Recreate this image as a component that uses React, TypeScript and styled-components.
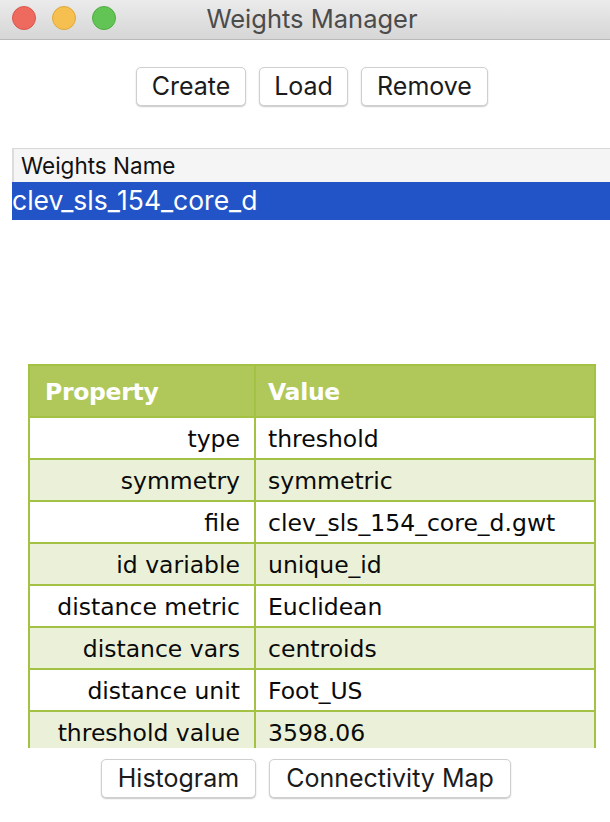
import React from "react";
import styled, { createGlobalStyle } from "styled-components";

const Global = createGlobalStyle`
  html, body { margin: 0; padding: 0; background: #ffffff; }
  body { width: 610px; height: 822px; overflow: hidden; font-family: Inter, "Liberation Sans", sans-serif; }
  * { box-sizing: border-box; }
`;

const Window = styled.div`
  width: 610px;
  height: 822px;
  display: flex;
  flex-direction: column;
  background: #ffffff;
`;

const TitleBar = styled.div`
  height: 40px;
  flex: none;
  display: flex;
  align-items: center;
  position: relative;
  background: linear-gradient(#ebebeb, #d6d6d6);
  border-bottom: 1px solid #b9b9b9;
`;

const Lights = styled.div`
  display: flex;
  gap: 16px;
  padding-left: 12px;
  margin-top: -3px;
`;

const Light = styled.span<{ $c: string; $b: string }>`
  width: 24px;
  height: 24px;
  border-radius: 50%;
  background: ${(p) => p.$c};
  border: 1px solid ${(p) => p.$b};
`;

const Title = styled.div`
  position: absolute;
  left: 0;
  right: 0;
  top: 0;
  bottom: 0;
  display: flex;
  align-items: center;
  justify-content: center;
  padding-left: 14px;
  padding-bottom: 3px;
  font-size: 25.5px;
  color: #4b4b4b;
  pointer-events: none;
`;

const ButtonRow = styled.div<{ $top: number; $shift: number }>`
  display: flex;
  justify-content: center;
  gap: 13px;
  margin-top: ${(p) => p.$top}px;
  padding-left: ${(p) => p.$shift}px;
  flex: none;
`;

const Button = styled.button<{ $w: number }>`
  width: ${(p) => p.$w}px;
  height: 39px;
  background: #ffffff;
  border: 1px solid #cfcfcf;
  border-radius: 5px;
  box-shadow: 0 1px 1.5px rgba(0, 0, 0, 0.22);
  font-family: Inter, "Liberation Sans", sans-serif;
  font-size: 25px;
  color: #1b1b1b;
  padding: 0 0 1px 0;
  display: flex;
  align-items: center;
  justify-content: center;
`;

const List = styled.div`
  margin-top: 42px;
  margin-left: 12px;
  flex: none;
`;

const ListHeader = styled.div`
  height: 34px;
  background: #f5f5f5;
  border-top: 1px solid #d8d8d8;
  border-left: 2px solid #dcdcdc;
  display: flex;
  align-items: center;
  padding-left: 7px;
  font-size: 22.5px;
  color: #111;
`;

const ListRow = styled.div<{ $selected?: boolean }>`
  height: 38px;
  background: ${(p) => (p.$selected ? "#2254c8" : "transparent")};
  color: ${(p) => (p.$selected ? "#ffffff" : "#111")};
  display: flex;
  align-items: center;
  padding-left: 0px;
  padding-bottom: 2px;
  font-size: 26.5px;
`;

const TableViewport = styled.div`
  margin-top: 144px;
  margin-left: 28px;
  width: 568px;
  height: 384px;
  overflow: hidden;
  flex: none;
`;

const Table = styled.div`
  display: grid;
  grid-template-columns: 226px 1fr;
  border: 2px solid #a3c142;
  border-bottom: none;
  font-family: "DejaVu Sans", Verdana, sans-serif;
`;

const HeadCell = styled.div<{ $last?: boolean }>`
  height: 52px;
  background: #b0c85a;
  color: #ffffff;
  font-weight: bold;
  font-size: 23.5px;
  display: flex;
  align-items: center;
  padding-left: ${(p) => (p.$last ? 12 : 15)}px;
  padding-top: 2px;
  border-bottom: 2px solid #a3c142;
  border-right: ${(p) => (p.$last ? "none" : "2px solid #a3c142")};
  letter-spacing: -0.3px;
`;

const Cell = styled.div<{ $alt: boolean; $key?: boolean }>`
  height: 42px;
  background: ${(p) => (p.$alt ? "#ebf1d9" : "#ffffff")};
  color: #0a0a0a;
  font-size: 23.5px;
  display: flex;
  align-items: center;
  justify-content: ${(p) => (p.$key ? "flex-end" : "flex-start")};
  padding-right: ${(p) => (p.$key ? 14 : 0)}px;
  padding-left: ${(p) => (p.$key ? 0 : 12)}px;
  padding-top: 2px;
  border-bottom: 2px solid #a3c142;
  border-right: ${(p) => (p.$key ? "2px solid #a3c142" : "none")};
  white-space: nowrap;
`;

const rows: [string, string][] = [
  ["type", "threshold"],
  ["symmetry", "symmetric"],
  ["file", "clev_sls_154_core_d.gwt"],
  ["id variable", "unique_id"],
  ["distance metric", "Euclidean"],
  ["distance vars", "centroids"],
  ["distance unit", "Foot_US"],
  ["threshold value", "3598.06"],
];

export default function App() {
  return (
    <>
      <Global />
      <Window>
        <TitleBar>
          <Lights>
            <Light $c="#ee6a5f" $b="#d9574d" />
            <Light $c="#f5c04f" $b="#dea93b" />
            <Light $c="#62c454" $b="#4fae43" />
          </Lights>
          <Title>Weights Manager</Title>
        </TitleBar>
        <ButtonRow $top={27} $shift={14}>
          <Button $w={110}>Create</Button>
          <Button $w={89}>Load</Button>
          <Button $w={127}>Remove</Button>
        </ButtonRow>
        <List>
          <ListHeader>Weights Name</ListHeader>
          <ListRow $selected>clev_sls_154_core_d</ListRow>
        </List>
        <TableViewport>
          <Table>
            <HeadCell>Property</HeadCell>
            <HeadCell $last>Value</HeadCell>
            {rows.map(([k, v], i) => (
              <React.Fragment key={k}>
                <Cell $alt={i % 2 === 1} $key>
                  {k}
                </Cell>
                <Cell $alt={i % 2 === 1}>{v}</Cell>
              </React.Fragment>
            ))}
          </Table>
        </TableViewport>
        <ButtonRow $top={11} $shift={2}>
          <Button $w={155}>Histogram</Button>
          <Button $w={242}>Connectivity Map</Button>
        </ButtonRow>
      </Window>
    </>
  );
}
